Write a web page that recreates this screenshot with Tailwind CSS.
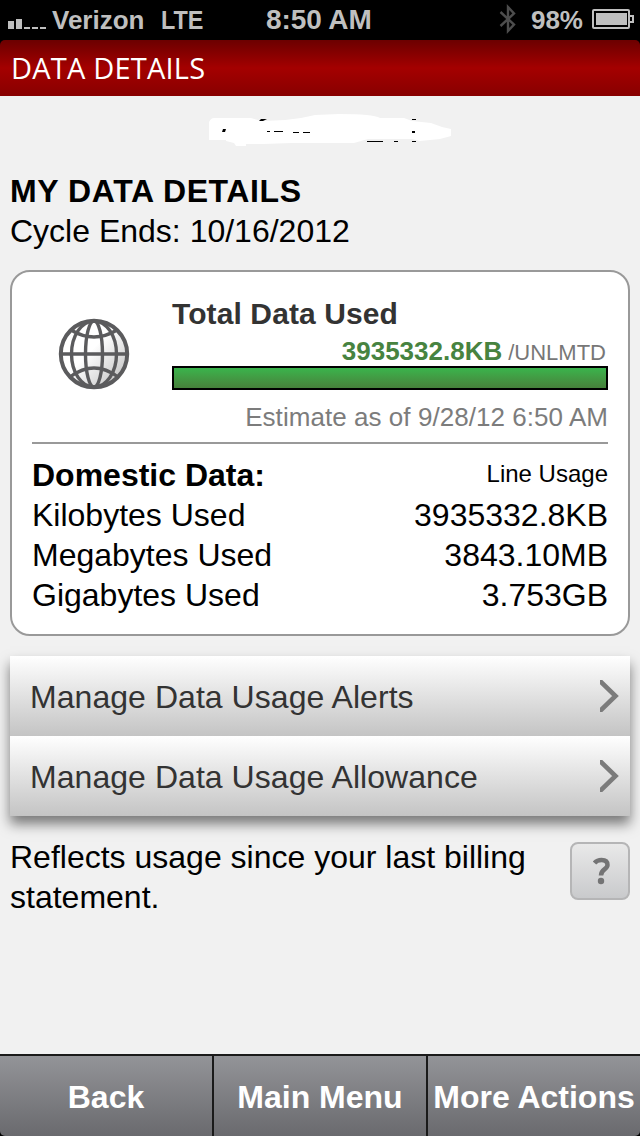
<!DOCTYPE html>
<html lang="en">
  <head>
    <meta charset="UTF-8" />
    <meta name="viewport" content="width=device-width, initial-scale=1.0" />
    <title>Data Details</title>
    <script src="https://cdn.jsdelivr.net/npm/@tailwindcss/browser@4"></script>
  </head>
  <body class="bg-black">
    <div
      class="relative flex flex-col w-[640px] h-[1136px] overflow-hidden text-[32px] leading-10 text-black font-['Liberation_Sans',sans-serif]"
    >
      <!-- status bar -->
      <div class="flex items-center h-10 shrink-0 bg-black text-[#bfbfbf] text-[26px] font-bold">
        <div class="flex items-center w-[266px] pl-2">
          <svg width="38" height="10" viewBox="0 0 38 10" class="mt-[8px]" fill="#bfbfbf" shape-rendering="crispEdges">
            <path d="M0 2h6v8H0zM8 0h6v10H8zM16 8h6v2h-6zM24 8h6v2h-6zM32 8h6v2h-6z" />
          </svg>
          <span class="ml-[6px]">Verizon</span>
          <span class="ml-[17px] origin-left scale-x-[0.9]">LTE</span>
        </div>
        <span class="text-[28px] tracking-[-0.1px]">8:50 AM</span>
        <div class="flex items-center ml-auto pr-[6px]">
          <svg width="18" height="32" viewBox="0 0 18 32" class="-mt-[2px]" fill="none" stroke="#4d4d4d" stroke-width="2.4">
            <path d="M1.5 9 15 21.5 9 28V4l6 6.5L1.5 23" />
          </svg>
          <span class="ml-[14px] mr-px">98%</span>
          <svg width="42" height="20" viewBox="0 0 42 20" class="ml-2 -mt-[2px]" fill="none" stroke="#bfbfbf">
            <rect x="1" y="1" width="36" height="18" rx="1" stroke-width="2" />
            <rect x="4" y="4" width="31" height="12" fill="#bfbfbf" stroke="none" />
            <path d="M38 7h3v6h-3" stroke-width="2" />
          </svg>
        </div>
      </div>

      <!-- title -->
      <div
        class="flex items-center h-14 shrink-0 pl-[11px] rounded-t-[5px] bg-linear-to-b from-[#6c0000] via-[#a40000] to-[#880000] text-white text-[29px] tracking-[0.2px] font-medium font-['Open_Sans',sans-serif]"
      >
        DATA DETAILS
      </div>

      <div class="flex flex-col grow bg-[#f1f1f1]">
        <!-- hidden phone number -->
        <svg width="250" height="40" viewBox="0 0 250 40" class="ml-[205px] mt-[10px] h-10 shrink-0">
          <path
            fill="#fff"
            d="M4 15Q6 11 9 11H46Q52 13 59 14L80 13 96 11 110 8 134 7Q168 7 175 11H199L207 14 226 16 237 20 246 22V29L235 32 215 34 207 32 163 32 149 36H87L58 37H41V39H31L29 36 21 34V33H4z"
            transform="translate(0 1)"
          />
          <path d="M18 23h3l-1 3h-3zM56 13h6l-4 2h-4zM62 25h3v1h-3zM69 25h9v1h-9zM88 26h6v1h-6zM98 26h7v1h-7zM162 35h16v1h-16zM189 35h4v1h-4zM207 35h4v1h-4zM207 25h3v2h-3zM207 13h4v1h-4z" />
        </svg>

        <div class="px-[10px] mt-[25px]">
          <h1 class="font-bold tracking-[0.6px]">MY DATA DETAILS</h1>
          <p>Cycle Ends: 10/16/2012</p>
        </div>

        <!-- usage card -->
        <div class="mx-[10px] mt-[19px] h-[366px] shrink-0 px-5 rounded-[20px] border-2 border-[#999] bg-white">
          <div class="flex h-[172px] border-b-2 border-[#999]">
            <svg width="72" height="72" viewBox="0 0 72 72" class="ml-[26px] mt-[46px] shrink-0" fill="none" stroke="#5b5b5d" stroke-width="3.4">
              <defs>
                <linearGradient id="globe" x1="0" y1="0" x2="1" y2="1">
                  <stop offset=".45" stop-color="#fff" />
                  <stop offset="1" stop-color="#b8b8b8" />
                </linearGradient>
              </defs>
              <circle cx="36" cy="36" r="33.2" fill="url(#globe)" stroke-width="4" />
              <ellipse cx="36" cy="36" rx="22.5" ry="33" />
              <ellipse cx="36" cy="36" rx="8.500" ry="33" />
              <path d="M2 36h68M13 12Q36 26 59 12M12 59Q36 41 60 59" />
            </svg>
            <div class="ml-[42px] grow">
              <h2 class="pt-[22px] text-[30px] font-bold tracking-[0.1px] text-[#333]">Total Data Used</h2>
              <div class="flex items-baseline justify-end h-8 leading-9 -mt-px pr-[2px]">
                <span class="text-[26px] font-bold text-[#478340]">3935332.8KB</span>
                <span class="ml-[6px] text-[22px] text-[#777]">/UNLMTD</span>
              </div>
              <div class="h-6 mt-px border-2 border-black bg-linear-to-b from-[#39b44c] to-[#46813b]"></div>
              <p class="mt-[7px] text-right text-[26px] tracking-[0.05px] text-[#7c7c7c] whitespace-nowrap">Estimate as of 9/28/12 6:50 AM</p>
            </div>
          </div>
          <div class="pt-[11px]">
            <div class="flex items-baseline justify-between h-10">
              <span class="font-bold">Domestic Data:</span>
              <span class="relative -top-1 text-[24px]">Line Usage</span>
            </div>
            <div class="flex justify-between"><span>Kilobytes Used</span><span>3935332.8KB</span></div>
            <div class="flex justify-between"><span>Megabytes Used</span><span>3843.10MB</span></div>
            <div class="flex justify-between"><span>Gigabytes Used</span><span>3.753GB</span></div>
          </div>
        </div>

        <!-- links -->
        <div class="mx-[10px] mt-5 shrink-0 text-[#333] shadow-[0_8px_12px_rgba(0,0,0,0.5)]">
          <a class="flex items-center justify-between h-20 pl-5 pr-[11px] pt-[2px] bg-linear-to-b from-white to-[#c4c4c4]">
            <span class="tracking-[0.05px]">Manage Data Usage Alerts</span>
            <svg width="19" height="32" viewBox="0 0 19 32" class="-mt-[2px]" fill="none" stroke="#7b7b7b" stroke-width="4.6">
              <path d="M-1 0 15.500 16 -1 32" />
            </svg>
          </a>
          <a class="flex items-center justify-between h-20 pl-5 pr-[11px] pt-[2px] bg-linear-to-b from-white to-[#c4c4c4]">
            <span class="tracking-[0.05px]">Manage Data Usage Allowance</span>
            <svg width="19" height="32" viewBox="0 0 19 32" class="-mt-[2px]" fill="none" stroke="#7b7b7b" stroke-width="4.6">
              <path d="M-1 0 15.500 16 -1 32" />
            </svg>
          </a>
        </div>

        <div class="flex justify-between px-[10px] mt-[21px]">
          <p class="w-[530px]">Reflects usage since your last billing statement.</p>
          <button
            class="flex items-center justify-center w-[60px] h-[58px] mt-[5px] rounded-[8px] border-2 border-[#b5b5b6] bg-linear-to-b from-[#e9e9e9] to-[#c9cacc]"
          >
            <svg width="18" height="28" viewBox="0 0 18 28" class="ml-[3px]" fill="none" stroke="#747475" stroke-width="4.5">
              <path d="M1.500 6Q4 3 8.500 3 14.500 3 14.500 8C14.500 12.500 8 12 8 18.500" />
              <circle cx="8" cy="24" r="3.200" fill="#747475" stroke="none" />
            </svg>
          </button>
        </div>

        <!-- bottom bar -->
        <div class="flex h-[82px] mt-auto shrink-0 bg-black">
          <div class="flex w-full border-t-2 border-[#1a1a1a] rounded-b-[5px] bg-linear-to-b from-[#939498] to-[#6a6a6e] text-white font-bold text-center leading-[82px] whitespace-nowrap">
            <a class="w-[214px] border-r-2 border-[#1a1a1a]">Back</a>
            <a class="w-[214px] border-r-2 border-[#1a1a1a]">Main Menu</a>
            <a class="w-[212px]">More Actions</a>
          </div>
        </div>
      </div>
    </div>
  </body>
</html>
